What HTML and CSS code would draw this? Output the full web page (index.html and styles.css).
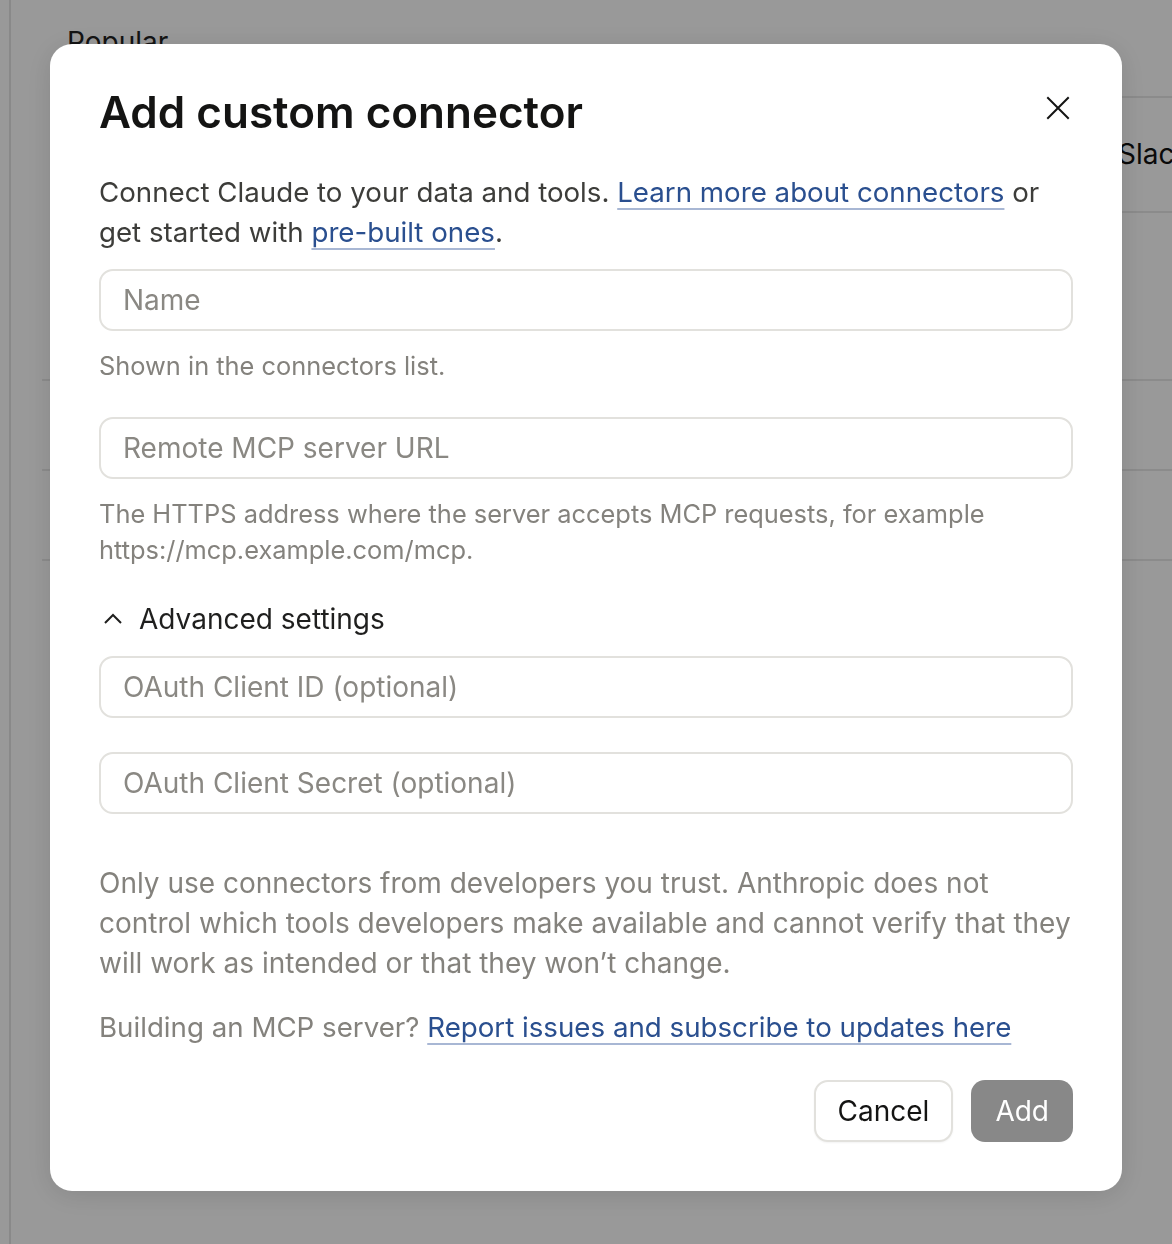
FILE: index.html
```html
<!DOCTYPE html>
<html lang="en">
<head>
    <meta charset="UTF-8">
    <meta name="viewport" content="width=device-width, initial-scale=1.0">
    <title>Connectors</title>
    <link rel="stylesheet" href="styles.css">
</head>
<body>
    <div class="page">
        <main class="catalog">
            <h2 class="catalog-title">Popular</h2>
            <ul class="catalog-list">
                <li class="catalog-row row-side row-tall"><span class="catalog-name">Slack</span></li>
                <li class="catalog-row row-side row-taller"></li>
                <li class="catalog-row"></li>
                <li class="catalog-row"></li>
                <li class="catalog-row"></li>
            </ul>
        </main>
    </div>

    <div class="overlay">
        <div class="dialog" role="dialog" aria-labelledby="dialog-title">
            <div class="dialog-head">
                <h1 class="dialog-title" id="dialog-title">Add custom connector</h1>
                <button class="close-btn" aria-label="Close">
                    <svg width="24" height="24" viewBox="0 0 24 24" fill="none" stroke="currentColor" stroke-width="2" stroke-linecap="square">
                        <path d="M2 2L22 22M22 2L2 22"/>
                    </svg>
                </button>
            </div>

            <p class="intro">
                Connect Claude to your data and tools. <a href="#" class="link">Learn more about connectors</a> or
                get started with <a href="#" class="link">pre-built ones</a>.
            </p>

            <div class="field">
                <input class="text-input" type="text" placeholder="Name">
                <p class="hint">Shown in the connectors list.</p>
            </div>

            <div class="field">
                <input class="text-input" type="text" placeholder="Remote MCP server URL">
                <p class="hint">The HTTPS address where the server accepts MCP requests, for example https://mcp.example.com/mcp.</p>
            </div>

            <button class="advanced-toggle">
                <svg width="20" height="20" viewBox="0 0 20 20" fill="none" stroke="currentColor" stroke-width="2">
                    <path d="M2 14L10 6L18 14"/>
                </svg>
                Advanced settings
            </button>

            <div class="advanced-fields">
                <input class="text-input" type="text" placeholder="OAuth Client ID (optional)">
                <input class="text-input" type="password" placeholder="OAuth Client Secret (optional)">
            </div>

            <p class="notice">Only use connectors from developers you trust. Anthropic does not control which tools developers make available and cannot verify that they will work as intended or that they won’t change.</p>

            <p class="notice notice-small">Building an MCP server? <a href="#" class="link">Report issues and subscribe to updates here</a></p>

            <div class="dialog-actions">
                <button class="btn btn-secondary">Cancel</button>
                <button class="btn btn-primary" disabled>Add</button>
            </div>
        </div>
    </div>
</body>
</html>
```

FILE: styles.css
```css
:root {
    --text-strong: #141413;
    --text-body: #3d3d3a;
    --text-muted: #84827d;
    --link: #2a4f8f;
    --link-line: #a8b7d4;
    --border: #e2e1dd;
}

* {
    box-sizing: border-box;
}

body {
    margin: 0;
    font-family: 'Inter', 'Noto Sans', sans-serif;
    background: #ffffff;
    color: var(--text-strong);
    height: 100vh;
    overflow: hidden;
}

/* page underneath the modal */
.page {
    height: 100%;
    padding-left: 9px;
}

.catalog {
    height: 100%;
    border-left: 2px solid #e4e4e4;
    padding: 22px 0 0 31px;
}

.catalog-title {
    margin: 0 0 0 25px;
    font-size: 28px;
    font-weight: 400;
    line-height: 40px;
    color: #222;
}

.catalog-list {
    list-style: none;
    margin: 34px 0 0;
    padding: 0;
}

.catalog-row {
    height: 90px;
    border-top: 2px solid #e8e8e8;
    display: flex;
    align-items: center;
}

/* first rows belong to the right-hand column only */
.row-side {
    margin-left: 1060px;
}

.row-tall {
    height: 115px;
}

.row-taller {
    height: 168px;
}

.catalog-name {
    margin: -2px 0 0 16px;
    font-size: 28px;
    color: #111;
    white-space: nowrap;
}

/* modal */
.overlay {
    position: fixed;
    inset: 0;
    background: rgba(0, 0, 0, 0.4);
    display: flex;
    justify-content: center;
    align-items: flex-start;
    padding-top: 44px;
}

.dialog {
    width: 1072px;
    background: #ffffff;
    border-radius: 22px;
    padding: 44px 49px 49px;
    box-shadow: 0 4px 28px rgba(0, 0, 0, 0.12);
    display: flex;
    flex-direction: column;
}

.dialog-head {
    display: flex;
    align-items: center;
    justify-content: space-between;
    height: 48px;
}

.dialog-title {
    margin: 0;
    font-size: 44px;
    font-weight: 600;
    line-height: 48px;
    color: var(--text-strong);
}

.close-btn {
    background: none;
    border: none;
    padding: 0;
    margin: -8px 3px 0 0;
    width: 24px;
    height: 24px;
    color: var(--text-strong);
    cursor: pointer;
    display: flex;
}

.intro {
    margin: 36px 0 0;
    font-size: 27.7px;
    line-height: 40px;
    color: var(--text-body);
}

.link {
    color: var(--link);
    text-decoration: underline;
    text-decoration-color: var(--link-line);
    text-decoration-thickness: 2px;
    text-underline-offset: 6px;
}

.field {
    margin-top: 17px;
}

.field + .field {
    margin-top: 33px;
}

.text-input {
    display: block;
    width: 100%;
    height: 62px;
    border: 2px solid var(--border);
    border-radius: 14px;
    padding: 0 22px;
    font-family: inherit;
    font-size: 28px;
    color: var(--text-strong);
    background: #ffffff;
    outline: none;
}

.text-input::placeholder {
    color: #8a8883;
}

.hint {
    margin: 17px 0 0;
    font-size: 25.4px;
    line-height: 36px;
    color: var(--text-muted);
}

.advanced-toggle {
    margin-top: 31px;
    align-self: flex-start;
    display: flex;
    align-items: center;
    gap: 16px;
    background: none;
    border: none;
    padding: 0 0 0 4px;
    height: 40px;
    font-family: inherit;
    font-size: 28px;
    color: #1f1f1e;
    cursor: pointer;
}

.advanced-fields {
    margin-top: 17px;
    display: flex;
    flex-direction: column;
    gap: 34px;
}

.notice {
    margin: 49px 0 0;
    font-size: 28px;
    line-height: 40px;
    color: var(--text-muted);
}

.notice-small {
    margin-top: 24px;
    font-size: 27.7px;
}

.dialog-actions {
    margin-top: 33px;
    display: flex;
    justify-content: flex-end;
    gap: 18px;
}

.btn {
    height: 62px;
    border-radius: 14px;
    padding: 0 24px;
    font-family: inherit;
    font-size: 28px;
    cursor: pointer;
}

.btn-secondary {
    padding: 0 22px;
    background: #ffffff;
    border: 2px solid var(--border);
    color: var(--text-strong);
    box-shadow: 0 1px 2px rgba(0, 0, 0, 0.05);
}

.btn-primary {
    background: #888888;
    border: none;
    color: #ffffff;
}

.btn-primary:disabled {
    cursor: default;
}
```
